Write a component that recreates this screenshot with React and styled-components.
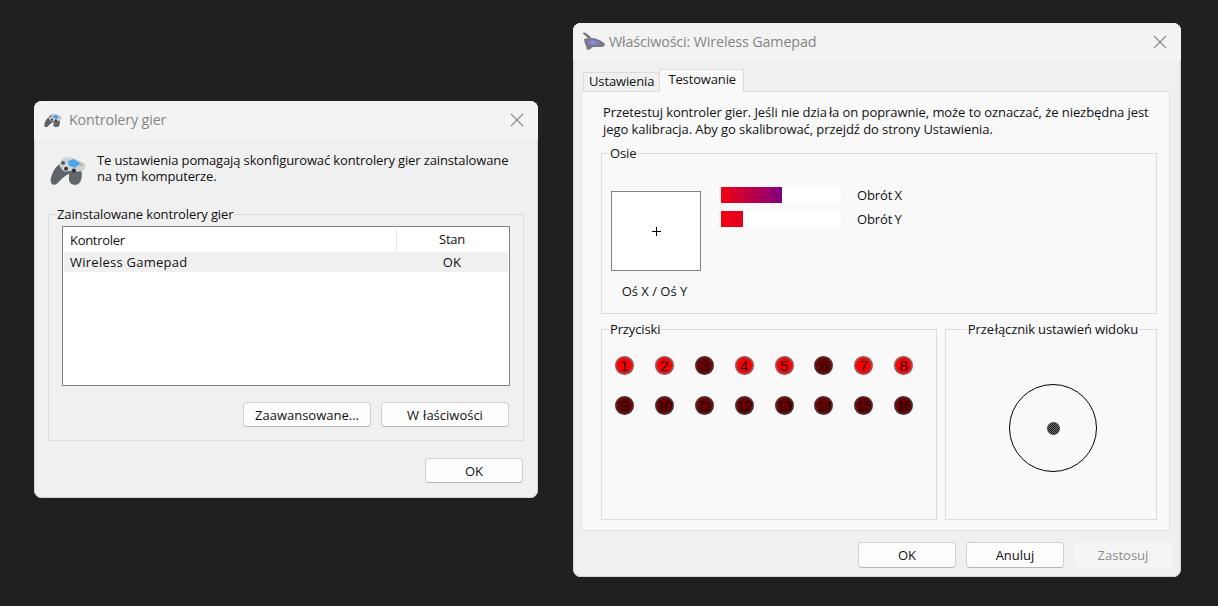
import React from 'react';
import styled, { createGlobalStyle } from 'styled-components';

const GlobalStyle = createGlobalStyle`
  html, body {
    margin: 0;
    padding: 0;
    background: #202020;
  }
  body {
    font-family: "Open Sans", "Liberation Sans", sans-serif;
    font-size: 13px;
    line-height: 16px;
    letter-spacing: -0.13px;
    color: #111;
  }
`;

const Desktop = styled.div`
  display: flex;
  align-items: flex-start;
  gap: 35px;
  width: 1218px;
  height: 606px;
  padding: 23px 0 0 34px;
  box-sizing: border-box;
  overflow: hidden;
`;

const Window = styled.div`
  display: flex;
  flex-direction: column;
  flex: none;
  width: ${(p) => p.$w}px;
  height: ${(p) => p.$h}px;
  margin-top: ${(p) => p.$top || 0}px;
  box-sizing: border-box;
  background: #f0f0f0;
  border-radius: 8px;
  overflow: hidden;
  box-shadow: inset 0 0 0 1px #d4d4d4;
`;

const TitleBar = styled.div`
  display: flex;
  align-items: center;
  flex: none;
  height: ${(p) => p.$h}px;
  padding: 0 14px 0 ${(p) => p.$left}px;
  background: #f3f3f3;
  color: #858585;
  font-size: 14.3px;
`;

const TitleText = styled.span`
  margin-left: ${(p) => p.$gap}px;
  flex: 1;
`;

const Kern = styled.span`
  margin-left: ${(p) => p.$by || 2}px;
`;

const Group = styled.fieldset`
  margin: 0;
  padding: 0;
  box-sizing: border-box;
  min-width: 0;
  height: ${(p) => p.$h}px;
  width: ${(p) => (p.$w ? `${p.$w}px` : 'auto')};
  border: 1px solid #dcdcdc;

  legend {
    padding: 0 1px;
    margin-left: ${(p) => (p.$center ? 'auto' : '7px')};
    margin-right: ${(p) => (p.$center ? 'auto' : '0')};
    line-height: 16px;
  }
`;

const Intro = styled.div`
  display: flex;
  gap: 11px;
  margin: 13px 0 22px 16px;
  height: 32px;
  align-items: flex-start;
`;

const BigIcon = styled.div`
  flex: none;
  margin-top: 4px;
`;

const ControllersGroup = styled(Group)`
  margin: 0 14px;
`;

const ListBox = styled.div`
  margin: 4px 13px 0 13px;
  height: 160px;
  box-sizing: border-box;
  border: 1px solid #82838a;
  background: #fff;
  padding: 2px 1px 0;
`;

const ListRow = styled.div`
  display: grid;
  grid-template-columns: 332px 1fr;
  align-items: center;
  height: ${(p) => p.$h}px;
  background: ${(p) => (p.$selected ? '#f0f0f0' : 'transparent')};
  letter-spacing: ${(p) => (p.$selected ? '0.25px' : '-0.3px')};
`;

const NameCell = styled.div`
  padding-left: 6px;
  margin-top: ${(p) => (p.$up ? -2 : 0)}px;
`;

const StatusCell = styled.div`
  text-align: center;
  height: 100%;
  line-height: ${(p) => p.$h}px;
  box-shadow: ${(p) => (p.$divider ? 'inset 1px 0 0 #e5e5e5' : 'none')};
`;

const ButtonRow = styled.div`
  display: flex;
  justify-content: flex-end;
  gap: 10px;
  margin: ${(p) => p.$margin};
`;

const PushButton = styled.button`
  width: ${(p) => p.$w}px;
  height: ${(p) => p.$h || 26}px;
  padding: 0;
  box-sizing: border-box;
  font: inherit;
  letter-spacing: 0;
  color: ${(p) => (p.disabled ? '#8c8c8c' : '#111')};
  background: ${(p) => (p.disabled ? '#f5f5f5' : '#fdfdfd')};
  border: 1px solid ${(p) => (p.disabled ? '#f5f5f5' : '#d0d0d0')};
  border-bottom-color: ${(p) => (p.disabled ? '#f5f5f5' : '#b8b8b8')};
  border-radius: 4px;
`;

const TabStrip = styled.div`
  display: flex;
  align-items: flex-end;
  height: 32px;
  flex: none;
  margin: 0 0 -1px 10px;
  position: relative;
`;

const Tab = styled.div`
  height: ${(p) => (p.$active ? 23 : 20)}px;
  line-height: ${(p) => (p.$active ? 19 : 17)}px;
  padding: 0 ${(p) => (p.$active ? '7px 0 8px' : '5px')};
  margin-left: ${(p) => (p.$active ? -1 : 0)}px;
  box-sizing: border-box;
  border: 1px solid #dcdcdc;
  border-bottom: ${(p) => (p.$active ? '0' : '1px solid #dcdcdc')};
  background: ${(p) => (p.$active ? '#f9f9f9' : '#f0f0f0')};
`;

const TabPane = styled.div`
  margin: 0 11px 0 8px;
  height: 440px;
  flex: none;
  box-sizing: border-box;
  border: 1px solid #e2e2e2;
  background: #f9f9f9;
  padding: 12px 12px 0 19px;
`;

const Description = styled.p`
  margin: 0 0 7px 2px;
  line-height: 17px;
  letter-spacing: -0.07px;
`;

const AxesGroup = styled(Group)`
  display: grid;
  grid-template-columns: 90px 1fr;
  column-gap: 20px;
  padding-top: 30px;
`;

const AxisColumn = styled.div`
  display: flex;
  flex-direction: column;
  align-items: center;
  gap: 12px;
  width: 90px;
  margin-left: 9px;
`;

const CrossBox = styled.div`
  display: flex;
  align-items: center;
  justify-content: center;
  width: 90px;
  height: 80px;
  box-sizing: border-box;
  border: 1px solid #82838a;
  background: #fff;
`;

const AxisLabel = styled.div`
  white-space: nowrap;
  margin-left: -3px;
  letter-spacing: 0;
`;

const Bars = styled.div`
  display: flex;
  flex-direction: column;
  gap: 8px;
  margin: -4px 0 0 9px;
`;

const BarRow = styled.div`
  display: flex;
  align-items: center;
  gap: 16px;
  word-spacing: -1px;
`;

const BarTrack = styled.div`
  width: 120px;
  height: 16px;
  background: #fff;
`;

const BarFill = styled.div`
  height: 100%;
  background: linear-gradient(to right, #f40010, ${(p) => p.$end});
`;

const LowerRow = styled.div`
  display: flex;
  gap: 8px;
  margin-top: 7px;
`;

const ButtonGrid = styled.div`
  display: grid;
  grid-template-columns: repeat(8, 19px);
  column-gap: 20.9px;
  row-gap: 21px;
  padding: 19px 0 0 13px;
`;

const Lamp = styled.div`
  width: 19px;
  height: 19px;
  box-sizing: border-box;
  border-radius: 50%;
  border: 2px solid ${(p) => (p.$on ? '#a4484c' : '#50282a')};
  background: ${(p) => (p.$on ? '#fa0000' : '#6c0000')};
  color: #1c0000;
  font-family: "Liberation Sans", sans-serif;
  font-size: 15px;
  line-height: 15px;
  text-align: center;
  letter-spacing: ${(p) => (p.$wide ? '-1px' : '0')};
  overflow: hidden;
`;

const HatGroup = styled(Group)`
  display: flex;
  justify-content: center;
  padding: 47px 0 0 4px;
`;

const HatRing = styled.div`
  display: flex;
  align-items: center;
  justify-content: center;
  width: 88px;
  height: 88px;
  box-sizing: border-box;
  border: 1px solid #000;
  border-radius: 50%;
`;

const HatDot = styled.div`
  width: 13px;
  height: 13px;
  border-radius: 50%;
  background: repeating-conic-gradient(#1a1a1a 0 25%, #707070 0 50%) 0 0 / 2px 2px;
`;

const CloseIcon = () => (
  <svg width="14" height="14" viewBox="0 0 14 14" fill="none" stroke="#8a8a8a" strokeWidth="1.1">
    <path d="M1 1 L13 13 M13 1 L1 13" />
  </svg>
);

const PadIcon = ({ size }) => (
  <svg width={size} height={size * 0.82} viewBox="0 0 36 30" style={{ display: 'block' }}>
    <path d="M12 7 C6 9 2 16 0.5 23 C-0.5 28 3 31 7 28 C10 25 13 21 19 18 L19 10 Z" fill="#5f6266" />
    <path d="M19 15 L31 13 C33 19 32 25 29 28 C25 31 20 29 19 25 Z" fill="#63666a" />
    <path d="M9 8 C11 2 17 0 23 2 L34 7 C37 9 36 13 33 15 L27 16 C23 15 19 15 15 16 C12 15 10 12 9 8 Z" fill="#cfd2d5" />
    <path d="M18 5 L24 3 L31 7.5 L25 12 L19 10 Z" fill="#4fa3e8" />
    <circle cx="13" cy="7" r="2" fill="#54565a" />
    <circle cx="16" cy="13" r="2" fill="#35373b" />
    <circle cx="24" cy="15" r="2.2" fill="#35373b" />
    <circle cx="32" cy="9" r="1.5" fill="#dca468" />
  </svg>
);

const WirelessIcon = () => (
  <svg width="24" height="20" viewBox="0 0 24 20" style={{ display: 'block' }}>
    <path d="M0.5 1 L3 0.5 L9 5 L7 7 Z" fill="#6f7078" />
    <path d="M2 7 C8 4.5 18 6.5 22.5 11.5 C24 14 21 15.5 18 15 L11 15 C9 17 7 18 5 18 C4.5 14 2 11 2 7 Z" fill="#7b7986" />
    <path d="M6 9 C10 7.5 15 8.5 18 11 C15 13 10 13.5 7 12.5 Z" fill="#8f78d6" />
    <path d="M8 10 L12 9 L13.5 11 L9 12 Z" fill="#5cb2dc" />
  </svg>
);

const PlusIcon = () => (
  <svg width="9" height="9" viewBox="0 0 9 9" stroke="#000" strokeWidth="1">
    <path d="M4.5 0 V9 M0 4.5 H9" />
  </svg>
);

const lamps = [true, true, false, true, true, false, true, true, false, false, false, false, false, false, false, false];

const ControllersWindow = () => (
  <Window $w={504} $h={397} $top={78}>
    <TitleBar $h={38} $left={10}>
      <PadIcon size={18} />
      <TitleText $gap={7}>Kontrolery gier</TitleText>
      <CloseIcon />
    </TitleBar>
    <Intro>
      <BigIcon><PadIcon size={36} /></BigIcon>
      <div>
        Te ustawienia pomagają skonfigurować kontrolery gier zainstalowane<br />
        na tym komputerze.
      </div>
    </Intro>
    <ControllersGroup $h={235}>
      <legend>Zainstalowane kontrolery gier</legend>
      <ListBox>
        <ListRow $h={23}>
          <NameCell $up>Kontroler</NameCell>
          <StatusCell $h={21} $divider>Stan</StatusCell>
        </ListRow>
        <ListRow $h={20} $selected>
          <NameCell>Wireless Gamepad</NameCell>
          <StatusCell $h={20}>OK</StatusCell>
        </ListRow>
      </ListBox>
      <ButtonRow $margin="16px 14px 0 0">
        <PushButton $w={128} $h={25}>Zaawansowane...</PushButton>
        <PushButton $w={128} $h={25}>W<Kern $by={4}>łaściwości</Kern></PushButton>
      </ButtonRow>
    </ControllersGroup>
    <ButtonRow $margin="17px 15px 0 0">
      <PushButton $w={98} $h={25}>OK</PushButton>
    </ButtonRow>
  </Window>
);

const PropertiesWindow = () => (
  <Window $w={608} $h={554}>
    <TitleBar $h={37} $left={9}>
      <WirelessIcon />
      <TitleText $gap={3}>Właściwości: Wireless Gamepad</TitleText>
      <CloseIcon />
    </TitleBar>
    <TabStrip>
      <Tab>Ustawienia</Tab>
      <Tab $active>Testowanie</Tab>
    </TabStrip>
    <TabPane>
      <Description>
        Przetestuj kontroler gier. Jeśli nie dzia<Kern>ła</Kern> on poprawnie, może to oznaczać, że niezbędna jest<br />
        jego kalibracja. Aby go skalibrować, przejdź do strony Ustawienia.
      </Description>
      <AxesGroup $h={169}>
        <legend>Osie</legend>
        <AxisColumn>
          <CrossBox><PlusIcon /></CrossBox>
          <AxisLabel>Oś X / Oś Y</AxisLabel>
        </AxisColumn>
        <Bars>
          <BarRow>
            <BarTrack><BarFill $end="#800080" style={{ width: 61 }} /></BarTrack>
            Obrót X
          </BarRow>
          <BarRow>
            <BarTrack><BarFill $end="#e00020" style={{ width: 22 }} /></BarTrack>
            Obrót Y
          </BarRow>
        </Bars>
      </AxesGroup>
      <LowerRow>
        <Group $h={199} $w={336}>
          <legend>Przyciski</legend>
          <ButtonGrid>
            {lamps.map((on, i) => (
              <Lamp key={i} $on={on} $wide={i >= 9}>{i + 1}</Lamp>
            ))}
          </ButtonGrid>
        </Group>
        <HatGroup $h={199} $w={212} $center>
          <legend>Prze<Kern $by={1}>łącznik</Kern> ustawień widoku</legend>
          <HatRing><HatDot /></HatRing>
        </HatGroup>
      </LowerRow>
    </TabPane>
    <ButtonRow $margin="11px 9px 0 0">
      <PushButton $w={98}>OK</PushButton>
      <PushButton $w={98}>Anuluj</PushButton>
      <PushButton $w={98} disabled>Zastosuj</PushButton>
    </ButtonRow>
  </Window>
);

export default function App() {
  return (
    <>
      <GlobalStyle />
      <Desktop>
        <ControllersWindow />
        <PropertiesWindow />
      </Desktop>
    </>
  );
}
